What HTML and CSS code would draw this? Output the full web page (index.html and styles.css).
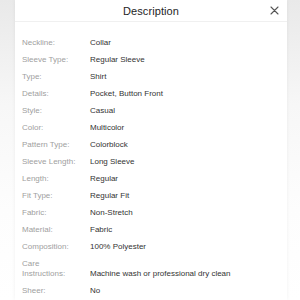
FILE: index.html
```html
<!DOCTYPE html>
<html lang="en">
<head>
    <meta charset="UTF-8">
    <meta name="viewport" content="width=device-width, initial-scale=1.0">
    <title>Description</title>
    <link rel="stylesheet" href="styles.css">
</head>
<body>
    <div class="sheet">
        <div class="sheet-header">
            <h1>Description</h1>
            <button class="close-btn" aria-label="Close">
                <svg width="9" height="9" viewBox="0 0 9 9">
                    <path d="M1 1L8 8M8 1L1 8" stroke="#555" stroke-width="1.1" stroke-linecap="round"/>
                </svg>
            </button>
        </div>

        <dl class="attrs">
            <div class="attr"><dt>Neckline:</dt><dd>Collar</dd></div>
            <div class="attr"><dt>Sleeve Type:</dt><dd>Regular Sleeve</dd></div>
            <div class="attr"><dt>Type:</dt><dd>Shirt</dd></div>
            <div class="attr"><dt>Details:</dt><dd>Pocket, Button Front</dd></div>
            <div class="attr"><dt>Style:</dt><dd>Casual</dd></div>
            <div class="attr"><dt>Color:</dt><dd>Multicolor</dd></div>
            <div class="attr"><dt>Pattern Type:</dt><dd>Colorblock</dd></div>
            <div class="attr"><dt>Sleeve Length:</dt><dd>Long Sleeve</dd></div>
            <div class="attr"><dt>Length:</dt><dd>Regular</dd></div>
            <div class="attr"><dt>Fit Type:</dt><dd>Regular Fit</dd></div>
            <div class="attr"><dt>Fabric:</dt><dd>Non-Stretch</dd></div>
            <div class="attr"><dt>Material:</dt><dd>Fabric</dd></div>
            <div class="attr"><dt>Composition:</dt><dd>100% Polyester</dd></div>
            <div class="attr"><dt>Care Instructions:</dt><dd>Machine wash or professional dry clean</dd></div>
            <div class="attr"><dt>Sheer:</dt><dd>No</dd></div>
        </dl>
    </div>
</body>
</html>
```

FILE: styles.css
```css
* {
    box-sizing: border-box;
    margin: 0;
    padding: 0;
    font-family: 'Liberation Sans', Arial, sans-serif;
}

body {
    background: linear-gradient(#e9e9e9, #f7f7f7 35%, #fdfdfd 70%, #fff);
    height: 300px;
    overflow: hidden;
    padding: 0 13px 0 15px;
}

.sheet {
    background: white;
    height: 100%;
    box-shadow: 0 0 4px rgba(0,0,0,0.06);
}

.sheet-header {
    height: 22px;
    border-bottom: 1px solid #f0f0f0;
    display: flex;
    align-items: center;
    justify-content: center;
    position: relative;
}

h1 {
    font-size: 11px;
    font-weight: normal;
    color: #1e1e1e;
    letter-spacing: 0.1px;
}

.close-btn {
    position: absolute;
    right: 8px;
    top: 6px;
    border: none;
    background: none;
    display: flex;
}

.attrs {
    padding: 16px 0 0 7px;
}

.attr {
    display: grid;
    grid-template-columns: 68px 1fr;
    align-items: end;
    min-height: 17px;
    font-size: 8px;
    line-height: 10px;
    padding-bottom: 7px;
}

dt {
    color: #a0a0a0;
    width: 60px;
}

dd {
    color: #333;
}
```
